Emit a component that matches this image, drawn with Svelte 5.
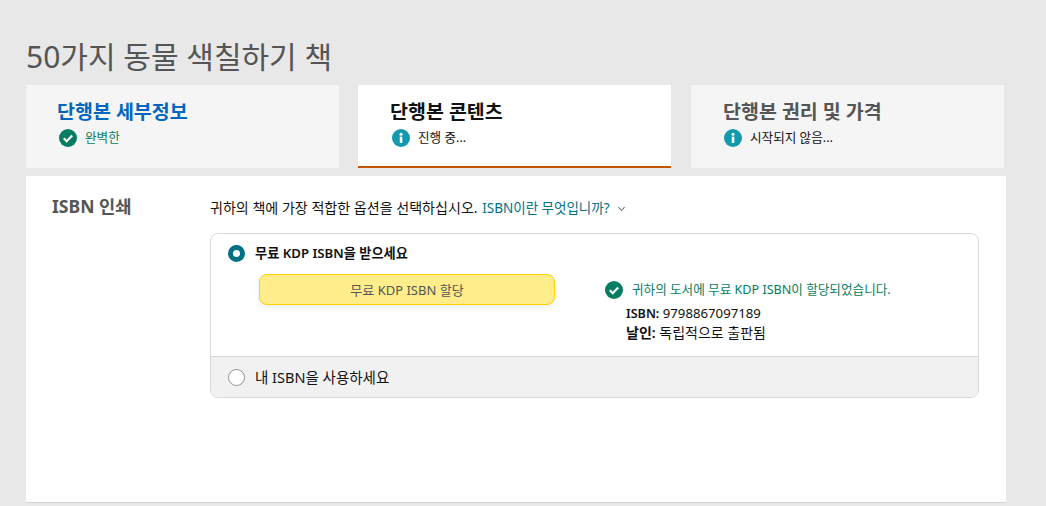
<script>
  let tabs = [
    { title: '단행본 세부정보', status: '완벽한', kind: 'done' },
    { title: '단행본 콘텐츠', status: '진행 중...', kind: 'active' },
    { title: '단행본 권리 및 가격', status: '시작되지 않음...', kind: 'todo' },
  ];
</script>

{#snippet checkIcon()}
  <svg class="status-icon" viewBox="0 0 18 18">
    <circle cx="9" cy="9" r="9" fill="#067d62" />
    <path d="M4.8 9.3 7.7 12.2 13.2 6.4" fill="none" stroke="#fff" stroke-width="2.2" />
  </svg>
{/snippet}

{#snippet infoIcon()}
  <svg class="status-icon" viewBox="0 0 18 18">
    <circle cx="9" cy="9" r="9" fill="#1399ae" />
    <rect x="7.8" y="7.6" width="2.5" height="6.4" fill="#fff" />
    <circle cx="9" cy="5.2" r="1.5" fill="#fff" />
  </svg>
{/snippet}

<div class="page">
  <h1>50가지 동물 색칠하기 책</h1>

  <div class="tabs">
    {#each tabs as tab}
      <div class="tab {tab.kind}">
        <div class="tab-title">{tab.title}</div>
        <div class="tab-status">
          {#if tab.kind === 'done'}
            {@render checkIcon()}
          {:else}
            {@render infoIcon()}
          {/if}
          <span>{tab.status}</span>
        </div>
      </div>
    {/each}
  </div>

  <div class="panel">
    <div class="section-label">ISBN 인쇄</div>
    <div class="section-body">
      <p class="intro">
        귀하의 책에 가장 적합한 옵션을 선택하십시오.
        <span class="link">ISBN이란 무엇입니까?</span>
        <svg class="chevron" viewBox="0 0 10 6"><path d="M1.5 1 5 4.5 8.5 1" fill="none" stroke="#6b7577" stroke-width="1.2" /></svg>
      </p>

      <div class="options">
        <div class="option selected">
          <div class="radio-row">
            <span class="radio on"></span>
            <span class="radio-label strong">무료 KDP ISBN을 받으세요</span>
          </div>
          <div class="option-body">
            <button class="assign">무료 KDP ISBN 할당</button>
            <div class="result">
              <div class="result-msg">
                {@render checkIcon()}
                <span>귀하의 도서에 무료 KDP ISBN이 할당되었습니다.</span>
              </div>
              <div class="result-line isbn"><b>ISBN:</b> 9798867097189</div>
              <div class="result-line"><b>날인:</b> 독립적으로 출판됨</div>
            </div>
          </div>
        </div>
        <div class="option other">
          <div class="radio-row">
            <span class="radio"></span>
            <span class="radio-label">내 ISBN을 사용하세요</span>
          </div>
        </div>
      </div>
    </div>
  </div>
</div>

<style>
  :global(body) {
    background: #e8e8e8;
    font-family: "Noto Sans", "Noto Sans CJK KR", sans-serif;
    color: #111;
  }

  .page {
    height: 506px;
    overflow: hidden;
    padding: 37px 40px 0 26px;
    box-sizing: border-box;
  }

  h1 {
    margin: 0 0 8px;
    font-size: 30px;
    line-height: 40px;
    font-weight: 400;
    color: #555;
  }

  .tabs {
    display: flex;
    gap: 19px;
    width: 978px;
    margin-bottom: 8px;
  }

  .tab {
    width: 313px;
    height: 83px;
    box-sizing: border-box;
    padding: 14px 31px 0;
    background: #f5f5f5;
  }

  .tab.todo {
    margin-left: 1px;
    padding-left: 32px;
  }

  .tab.active {
    background: #fff;
    border-bottom: 2px solid #c45500;
    padding-left: 32px;
  }

  .tab-title {
    font-size: 19.5px;
    line-height: 26px;
    font-weight: 700;
    color: #555;
  }

  .tab.done .tab-title { color: #0066c0; }
  .tab.active .tab-title { color: #111; }

  .tab-status {
    display: flex;
    align-items: center;
    gap: 8px;
    margin-top: 4px;
    font-size: 12.6px;
    line-height: 18px;
  }

  .tab.done .tab-status { color: #067d62; padding-left: 2px; }
  .tab.active .tab-status { padding-left: 2px; }
  .tab.todo .tab-status { padding-left: 1px; }

  .status-icon {
    width: 18px;
    height: 18px;
    flex: none;
  }

  .panel {
    display: flex;
    width: 980px;
    height: 327px;
    box-sizing: border-box;
    background: #fff;
    border-bottom: 1px solid #d5d5d5;
    padding: 17px 27px 0 26px;
  }

  .section-label {
    width: 158px;
    flex: none;
    font-size: 17.6px;
    line-height: 26px;
    font-weight: 700;
    color: #555;
  }

  .section-body { flex: 1; }

  .intro {
    margin: 6px 0 16px;
    font-size: 14.05px;
    line-height: 18px;
  }

  .link {
    margin-left: 1px;
    font-size: 13.5px;
    color: #007185;
  }

  .chevron {
    width: 9px;
    height: 6px;
    margin-left: 4px;
    vertical-align: 1px;
  }

  .options {
    border: 1px solid #d5d9d9;
    border-radius: 8px;
    overflow: hidden;
  }

  .option.selected {
    height: 122px;
    box-sizing: border-box;
    padding: 9px 17px 0;
  }

  .option.other {
    height: 41px;
    box-sizing: border-box;
    padding: 10px 17px 0;
    background: #f1f1f1;
    border-top: 1px solid #d5d9d9;
  }

  .radio-row {
    display: flex;
    align-items: center;
    gap: 8px;
  }

  .radio {
    width: 15px;
    height: 15px;
    border-radius: 50%;
    background: #fff;
    border: 1px solid #8d9096;
    flex: none;
  }

  .radio.on {
    box-sizing: border-box;
    width: 17px;
    height: 17px;
    border: 5px solid #007185;
    margin-right: 1px;
  }

  .radio-label {
    font-size: 14.5px;
    line-height: 20px;
    margin-left: 2px;
  }

  .radio-label.strong {
    font-size: 13.2px;
    font-weight: 600;
    margin-left: 1px;
  }

  .option-body {
    display: flex;
    margin-top: 11px;
    padding-left: 31px;
  }

  .assign {
    width: 296px;
    height: 31px;
    flex: none;
    border: 1px solid #fcd200;
    border-radius: 8px;
    background: #ffec8b;
    box-shadow: 0 2px 5px rgba(213, 217, 217, 0.5);
    font: inherit;
    font-size: 13px;
    color: #555;
  }

  .result {
    margin-left: 50px;
    margin-top: 7px;
  }

  .result-msg {
    display: flex;
    align-items: center;
    gap: 9px;
    font-size: 12.6px;
    line-height: 18px;
    color: #067d62;
  }

  .result-line {
    padding-left: 21px;
    font-size: 14px;
    line-height: 19px;
  }

  .result-line.isbn { font-size: 13.2px; }
  .result-line.isbn b { font-size: 12.6px; }

  .result-msg + .result-line { margin-top: 5px; }

  .result-line b { font-weight: 600; }
</style>
